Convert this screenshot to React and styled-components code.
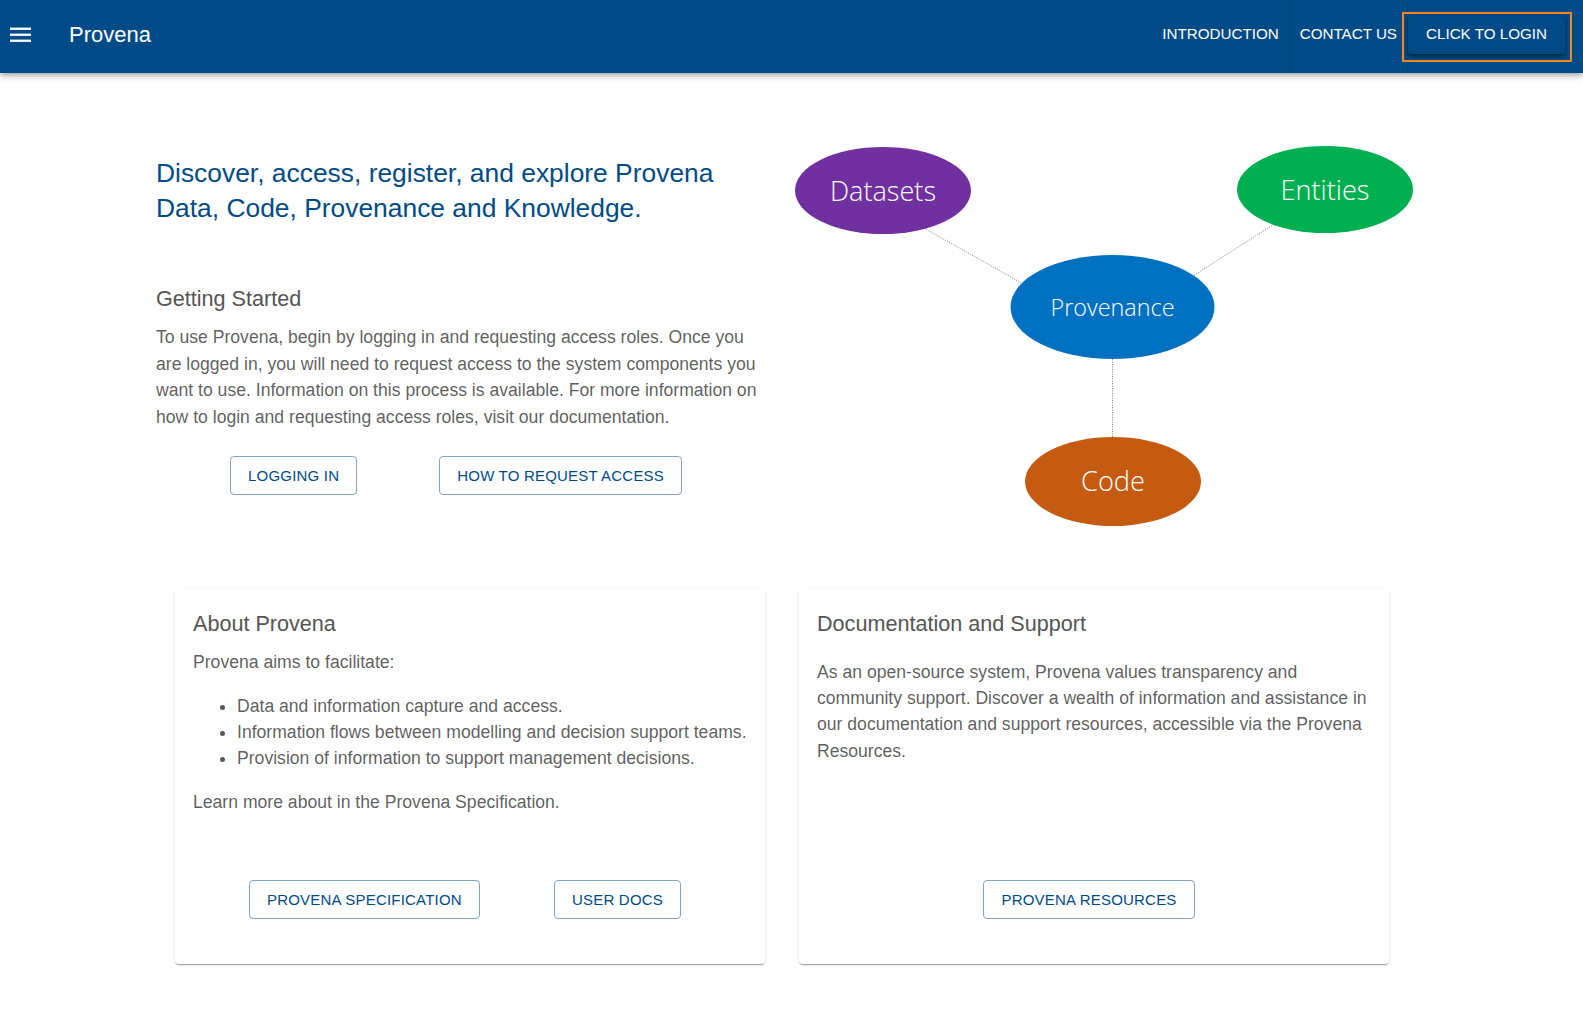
import React from "react";
import styled, { createGlobalStyle } from "styled-components";

const BLUE = "#004b87";
const GREY_TEXT = "rgba(0, 0, 0, 0.65)";

const GlobalStyle = createGlobalStyle`
  html, body {
    margin: 0;
    padding: 0;
    background: #fff;
  }
  body {
    font-family: "Liberation Sans", Arial, Helvetica, sans-serif;
  }
  * {
    box-sizing: border-box;
  }
`;

// ---------- header ----------

const Header = styled.header`
  height: 73px;
  background: ${BLUE};
  display: flex;
  align-items: stretch;
  padding: 0 18px 0 10px;
  position: relative;
  z-index: 2;
  box-shadow: 0 2px 4px -1px rgba(0, 0, 0, 0.2), 0 4px 5px 0 rgba(0, 0, 0, 0.14),
    0 1px 10px 0 rgba(0, 0, 0, 0.12);
`;

const Brand = styled.div`
  display: flex;
  align-items: center;
  padding-bottom: 3px;
  flex: 1;
`;

const MenuIcon = styled.svg`
  display: block;
  width: 21px;
  height: 15px;
  fill: #fff;
  margin-bottom: 2px;
`;

const Title = styled.h1`
  margin: 0 0 0 38px;
  font-size: 22px;
  font-weight: 400;
  color: #fff;
  line-height: 1;
`;

const Nav = styled.nav`
  display: flex;
  align-items: stretch;
`;

const NavItem = styled.a`
  display: flex;
  align-items: center;
  padding: 0 10px 7px;
  border-right: 1px solid rgba(0, 0, 0, 0.12);
  color: #fff;
  font-size: 15.2px;
  text-transform: uppercase;
  text-decoration: none;
  cursor: pointer;
`;

const LoginSlot = styled.div`
  display: flex;
  align-items: center;
  padding-bottom: 3px;
`;

const LoginButton = styled.button`
  position: relative;
  height: 38px;
  padding: 0 18px 3px;
  border: none;
  border-radius: 4px;
  background: ${BLUE};
  color: #fff;
  font-family: inherit;
  font-size: 15.2px;
  text-transform: uppercase;
  box-shadow: 0 3px 3px -2px rgba(0, 0, 0, 0.35), 0 3px 4px 0 rgba(0, 0, 0, 0.24),
    0 1px 8px 0 rgba(0, 0, 0, 0.2);
  cursor: pointer;

  /* keyboard focus frame drawn over the button */
  &::after {
    content: "";
    position: absolute;
    inset: -4px -7px -8px -6px;
    border: 2px solid #f5861f;
    pointer-events: none;
  }
`;

// ---------- main ----------

const Main = styled.main`
  padding: 63px 0 60px;
`;

const Top = styled.section`
  display: flex;
  align-items: flex-start;
  padding-left: 156px;
`;

const Intro = styled.div`
  width: 606px;
  padding-top: 20px;
`;

const Headline = styled.h2`
  margin: 0;
  font-size: 26.4px;
  line-height: 35.2px;
  font-weight: 400;
  color: ${BLUE};
`;

const SectionTitle = styled.h3`
  margin: ${(p) => p.$top || 0}px 0 7.5px;
  font-size: 21.6px;
  line-height: 34.5px;
  font-weight: 400;
  color: #555;
`;

const Text = styled.p`
  margin: ${(p) => p.$top || 0}px 0 0;
  font-size: 17.6px;
  line-height: 26.4px;
  color: ${GREY_TEXT};
`;

const ButtonRow = styled.div`
  display: flex;
  justify-content: ${(p) => (p.$single ? "center" : "space-between")};
  padding: 0 ${(p) => p.$pr || 0}px 0 ${(p) => p.$pl || 0}px;
  margin-top: 25.6px;
`;

const OutlineButton = styled.a`
  display: inline-flex;
  align-items: center;
  height: 39px;
  padding: 0 17px;
  border: 1px solid rgba(0, 75, 135, 0.5);
  border-radius: 4px;
  color: ${BLUE};
  font-size: 15px;
  letter-spacing: 0.2px;
  text-transform: uppercase;
  text-decoration: none;
  cursor: pointer;
`;

const Diagram = styled.svg`
  display: block;
  margin-left: 23px;
  flex-shrink: 0;
`;

// ---------- cards ----------

const CardsRow = styled.section`
  display: flex;
  gap: 34px;
  padding-left: 175px;
  margin-top: 52.6px;
`;

const Card = styled.article`
  width: 590px;
  height: 375px;
  padding: 18px 18px 16px;
  display: flex;
  flex-direction: column;
  border-radius: 4px;
  background: #fff;
  box-shadow: 0 2px 1px -1px rgba(0, 0, 0, 0.2), 0 1px 1px 0 rgba(0, 0, 0, 0.14),
    0 1px 3px 0 rgba(0, 0, 0, 0.12);
`;

const List = styled.ul`
  margin: 17.6px 0;
  padding-left: 44px;
  font-size: 17.6px;
  line-height: 26.4px;
  color: ${GREY_TEXT};

  li {
    white-space: nowrap;
  }
`;

const CardActions = styled(ButtonRow)`
  margin-top: auto;
  margin-bottom: 29px;
`;

// ---------- diagram parts ----------

const nodes = [
  { label: "Datasets", cx: 883, cy: 190.5, rx: 88, ry: 43.5, fill: "#7030a0", size: 28.4, len: 106, base: 201 },
  { label: "Entities", cx: 1325, cy: 189.5, rx: 88, ry: 43.5, fill: "#00b050", size: 28.4, len: 89, base: 200 },
  { label: "Provenance", cx: 1112.5, cy: 307, rx: 102, ry: 52, fill: "#0070c0", size: 24.4, len: 124, base: 315.5 },
  { label: "Code", cx: 1113, cy: 481.5, rx: 88, ry: 44.5, fill: "#c55a11", size: 28.4, len: 64, base: 491 },
];

const links = [
  [922, 227, 1026, 285.5],
  [1276, 223, 1188, 279],
  [1112.5, 352, 1112.5, 442],
];

const ProvenanceDiagram = () => (
  <Diagram width="640" height="400" viewBox="785 136 640 400">
    {links.map(([x1, y1, x2, y2], i) => (
      <line
        key={i}
        x1={x1}
        y1={y1}
        x2={x2}
        y2={y2}
        stroke="#808080"
        strokeWidth="1"
        strokeDasharray="1 1.4"
      />
    ))}
    {nodes.map((n) => (
      <g key={n.label}>
        <ellipse cx={n.cx} cy={n.cy} rx={n.rx} ry={n.ry} fill={n.fill} />
        <text
          x={n.cx}
          y={n.base}
          textAnchor="middle"
          fill="#fff"
          fontFamily="'Open Sans', 'Noto Sans', sans-serif"
          fontWeight="300"
          fontSize={n.size}
          textLength={n.len}
          lengthAdjust="spacingAndGlyphs"
        >
          {n.label}
        </text>
      </g>
    ))}
  </Diagram>
);

export default function App() {
  return (
    <>
      <GlobalStyle />
      <Header>
        <Brand>
          <MenuIcon viewBox="0 0 21 15">
            <rect x="0" y="0.6" width="21" height="2.3" />
            <rect x="0" y="6.6" width="21" height="2.3" />
            <rect x="0" y="12.6" width="21" height="2.3" />
          </MenuIcon>
          <Title>Provena</Title>
        </Brand>
        <Nav>
          <NavItem>Introduction</NavItem>
          <NavItem>Contact us</NavItem>
          <LoginSlot>
            <LoginButton>Click to login</LoginButton>
          </LoginSlot>
        </Nav>
      </Header>

      <Main>
        <Top>
          <Intro>
            <Headline>
              Discover, access, register, and explore Provena Data, Code, Provenance and Knowledge.
            </Headline>
            <SectionTitle $top={56}>Getting Started</SectionTitle>
            <Text>
              To use Provena, begin by logging in and requesting access roles. Once you are logged in,
              you will need to request access to the system components you want to use. Information
              on this process is available. For more information on how to login and requesting
              access roles, visit our documentation.
            </Text>
            <ButtonRow $pl={74} $pr={80}>
              <OutlineButton>Logging in</OutlineButton>
              <OutlineButton>How to request access</OutlineButton>
            </ButtonRow>
          </Intro>
          <ProvenanceDiagram />
        </Top>

        <CardsRow>
          <Card>
            <SectionTitle>About Provena</SectionTitle>
            <Text>Provena aims to facilitate:</Text>
            <List>
              <li>Data and information capture and access.</li>
              <li>Information flows between modelling and decision support teams.</li>
              <li>Provision of information to support management decisions.</li>
            </List>
            <Text>Learn more about in the Provena Specification.</Text>
            <CardActions $pl={56} $pr={66}>
              <OutlineButton>Provena specification</OutlineButton>
              <OutlineButton>User docs</OutlineButton>
            </CardActions>
          </Card>
          <Card>
            <SectionTitle>Documentation and Support</SectionTitle>
            <Text $top={10}>
              As an open-source system, Provena values transparency and community support. Discover a
              wealth of information and assistance in our documentation and support resources,
              accessible via the Provena Resources.
            </Text>
            <CardActions $single $pr={10}>
              <OutlineButton>Provena resources</OutlineButton>
            </CardActions>
          </Card>
        </CardsRow>
      </Main>
    </>
  );
}
